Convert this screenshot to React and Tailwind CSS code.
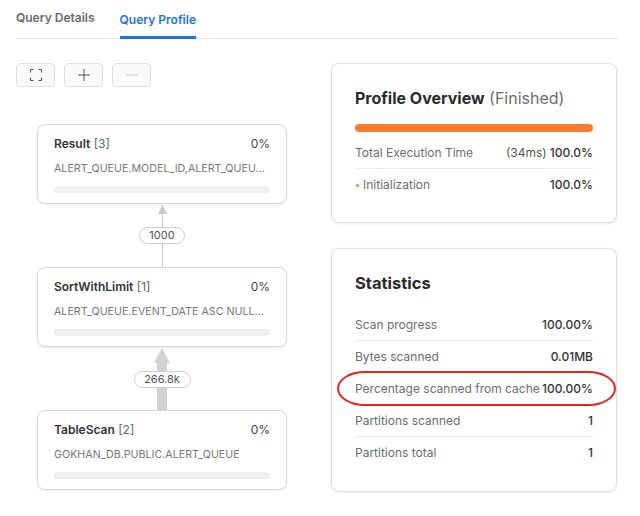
const nodes = [
  { name: "Result", id: 3, pct: "0%", detail: "ALERT_QUEUE.MODEL_ID,ALERT_QUEU..." },
  { name: "SortWithLimit", id: 1, pct: "0%", detail: "ALERT_QUEUE.EVENT_DATE ASC NULL..." },
  { name: "TableScan", id: 2, pct: "0%", detail: "GOKHAN_DB.PUBLIC.ALERT_QUEUE" },
];

const stats = [
  ["Scan progress", "100.00%"],
  ["Bytes scanned", "0.01MB"],
  ["Percentage scanned from cache", "100.00%", true],
  ["Partitions scanned", "1"],
  ["Partitions total", "1"],
];

function NodeCard({ node }) {
  return (
    <div className="h-[80px] w-[250px] rounded-[8px] border border-[#d9d9d9] bg-white px-4 pt-[11px] shadow-[0_1px_2px_rgba(0,0,0,0.08)]">
      <div className="flex h-4 items-center justify-between text-[12px] leading-4 text-[#333]">
        <span>
          <span className="font-semibold">{node.name}</span>{" "}
          <span className="text-[#666]">[{node.id}]</span>
        </span>
        <span className="text-[#444]">{node.pct}</span>
      </div>
      <div className="mt-[9px] h-4 whitespace-nowrap text-[10.7px] leading-4 text-[#777]">
        {node.detail}
      </div>
      <div className="mt-[9px] h-[7px] rounded-full bg-[#efefef]" />
    </div>
  );
}

function Connector({ label, thick }) {
  const line = thick ? "w-[10px] bg-[#d2d2d2]" : "w-px bg-[#c9c9c9]";
  return (
    <div className="flex h-[63px] flex-col items-center">
      {thick ? (
        <svg width="16" height="15" viewBox="0 0 16 15" className="mt-px block">
          <polygon points="8,0 16,15 0,15" fill="#d2d2d2" />
        </svg>
      ) : (
        <svg width="9" height="9" viewBox="0 0 9 9" className="mt-px block">
          <polygon points="4.5,0 9,9 0,9" fill="#c9c9c9" />
        </svg>
      )}
      <div className={`${line} ${thick ? "h-[8px]" : "h-[13px]"}`} />
      <div
        className={`flex h-[17px] items-center justify-center rounded-full border border-[#cfcfcf] bg-white text-[11px] leading-none text-[#555] ${
          thick ? "w-[57px]" : "w-[46px]"
        }`}
      >
        {label}
      </div>
      <div className={`${line} flex-1`} />
    </div>
  );
}

function ToolButton({ children }) {
  return (
    <div className="flex h-[24px] w-[39px] items-center justify-center rounded-[5px] border border-[#dedede] bg-[#fafafa]">
      {children}
    </div>
  );
}

function Row({ label, value, last, children }) {
  return (
    <div
      className={`relative flex h-[32px] items-center justify-between whitespace-nowrap text-[12px] ${
        last ? "" : "border-b border-[#ececec]"
      }`}
    >
      <span className="flex items-center text-[#6e6e6e]">{children}{label}</span>
      <span className="font-medium text-[#333]">{value}</span>
    </div>
  );
}

export default function App() {
  return (
    <div className="h-[516px] w-[640px] bg-white font-['Inter',sans-serif]">
      <div className="w-[618px] pl-4">
        <div className="flex h-[39px] gap-[25px] border-b border-[#e3e3e3] text-[12px] font-semibold">
          <div className="flex items-center pb-[3px] text-[#6b6b6b]">Query Details</div>
          <div className="-mb-px flex items-center border-b-[3px] border-[#1a73e8] pt-[3px] text-[#1a73e8]">
            Query Profile
          </div>
        </div>

        <div className="mt-6 flex">
          <div className="w-[315px]">
            <div className="flex gap-[9px]">
              <ToolButton>
                <svg width="12" height="12" viewBox="0 0 12 12" fill="none" stroke="#555" strokeWidth="1">
                  <path d="M0.5 3.5V0.5H3.5M8.5 0.5H11.5V3.5M11.5 8.5V11.5H8.5M3.5 11.5H0.5V8.5" />
                </svg>
              </ToolButton>
              <ToolButton>
                <svg width="12" height="12" viewBox="0 0 12 12" stroke="#555" strokeWidth="1">
                  <path d="M6 0V12M0 6H12" />
                </svg>
              </ToolButton>
              <ToolButton>
                <svg width="12" height="12" viewBox="0 0 12 12" stroke="#c8c8c8" strokeWidth="1">
                  <path d="M0 6H12" />
                </svg>
              </ToolButton>
            </div>

            <div className="ml-[21px] mt-[37px] w-[250px]">
              <NodeCard node={nodes[0]} />
              <Connector label="1000" />
              <NodeCard node={nodes[1]} />
              <Connector label="266.8k" thick />
              <NodeCard node={nodes[2]} />
            </div>
          </div>

          <div className="w-[286px]">
            <div className="h-[160px] rounded-[8px] border border-[#e0e0e0] bg-white px-[23px] pt-[22px] shadow-[0_1px_3px_rgba(0,0,0,0.08)]">
              <div className="h-6 text-[16px] leading-6 text-[#2a2a2a]">
                <span className="font-bold">Profile Overview</span>{" "}
                <span className="text-[#6e6e6e]">(Finished)</span>
              </div>
              <div className="mt-[14px] h-[8px] rounded-full bg-[#fd7a2c]" />
              <div className="mt-[5px]">
                <Row label="Total Execution Time" value={<><span className="font-normal text-[#555]">(34ms)</span> 100.0%</>} />
                <Row label="Initialization" value="100.0%" last>
                  <span className="mr-[4px] ml-[1px] h-[3px] w-[3px] rounded-full bg-[#fd7a2c]" />
                </Row>
              </div>
            </div>

            <div className="mt-[25px] h-[244px] rounded-[8px] border border-[#e0e0e0] bg-white px-[23px] pt-[22px] shadow-[0_1px_3px_rgba(0,0,0,0.08)]">
              <div className="h-6 text-[16.5px] font-bold leading-6 text-[#2a2a2a]">Statistics</div>
              <div className="mt-[14px]">
                {stats.map(([label, value, marked], i) => (
                  <Row key={label} label={label} value={value} last={i === stats.length - 1}>
                    {marked && (
                      <span className="absolute -left-[18px] -right-[23px] -top-[2px] -bottom-[2px] rounded-[30px/19px] border-2 border-[#e8231a]" />
                    )}
                  </Row>
                ))}
              </div>
            </div>
          </div>
        </div>
      </div>
    </div>
  );
}
